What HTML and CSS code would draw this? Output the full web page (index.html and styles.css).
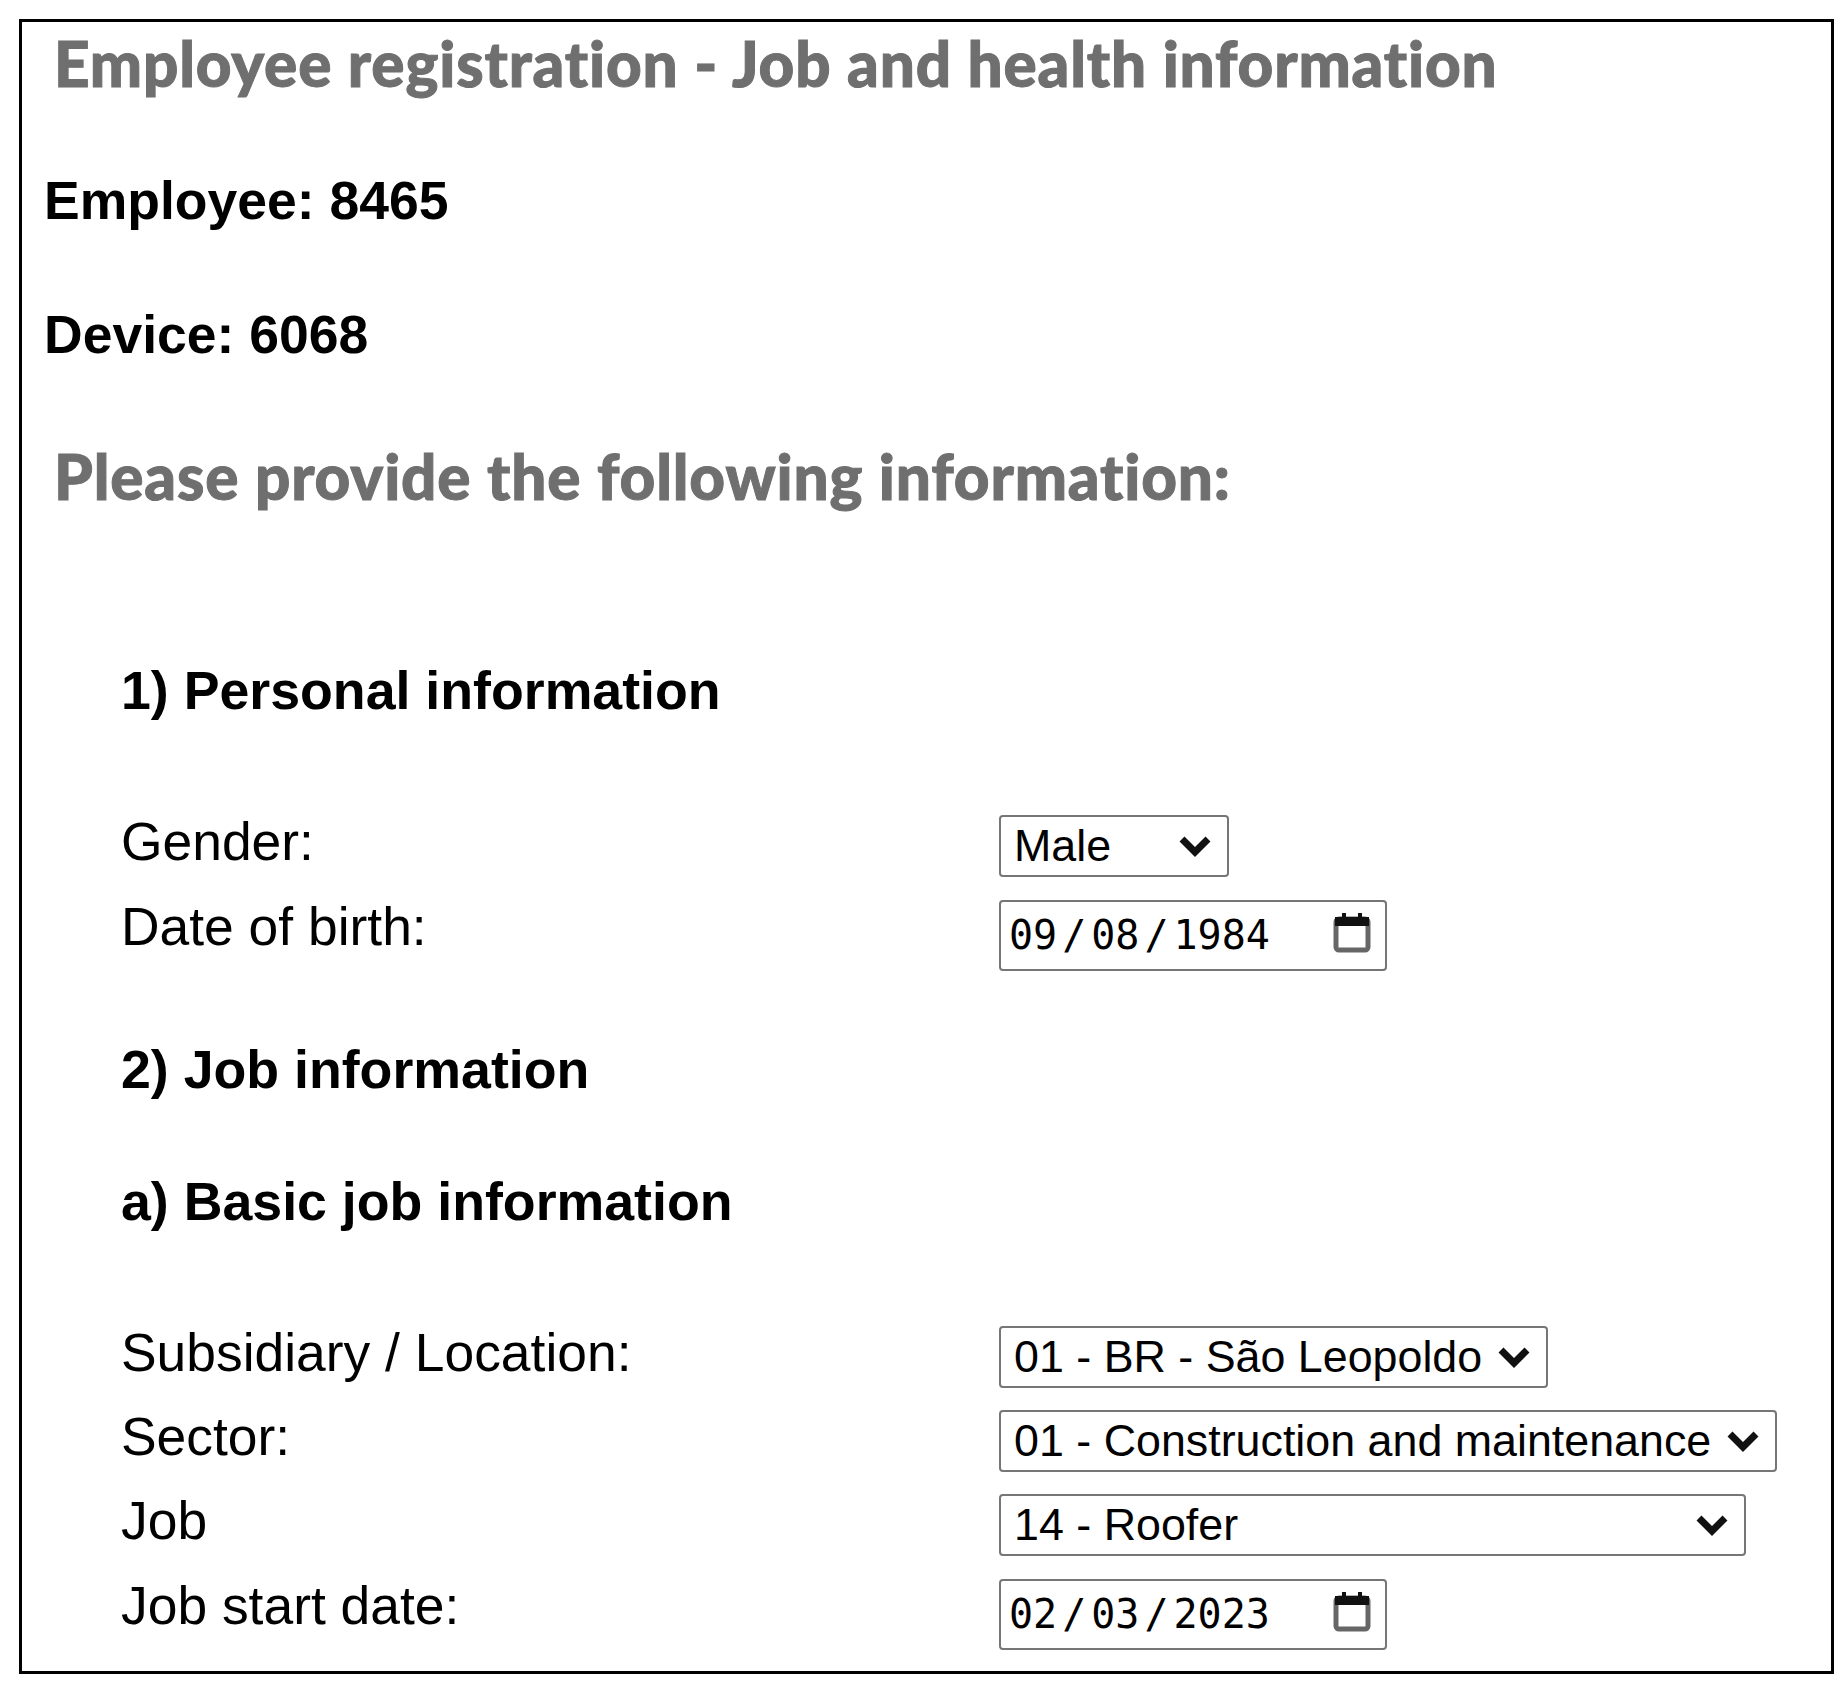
FILE: index.html
```html
<!DOCTYPE html>
<html lang="en-US">
<head>
<meta charset="utf-8">
<title>Employee registration</title>
<link rel="stylesheet" href="styles.css">
</head>
<body>
<main class="frame">
  <h1 class="title">Employee registration - Job and health information</h1>
  <p class="meta meta-employee">Employee: 8465</p>
  <p class="meta meta-device">Device: 6068</p>
  <h2 class="title title-sub">Please provide the following information:</h2>
  <form class="form">
    <h3 class="section section-first">1) Personal information</h3>
    <div class="row row-first">
      <label class="label" for="gender">Gender:</label>
      <select class="control select-gender" id="gender"><option>Male</option></select>
    </div>
    <div class="row row-date">
      <label class="label" for="dob">Date of birth:</label>
      <input class="date" id="dob" type="date" value="1984-09-08">
    </div>
    <h3 class="section section-job">2) Job information</h3>
    <h3 class="section section-basic">a) Basic job information</h3>
    <div class="row row-first">
      <label class="label" for="sub">Subsidiary / Location:</label>
      <select class="control select-sub" id="sub"><option>01 - BR - São Leopoldo</option></select>
    </div>
    <div class="row">
      <label class="label" for="sector">Sector:</label>
      <select class="control select-sector" id="sector"><option>01 - Construction and maintenance</option></select>
    </div>
    <div class="row">
      <label class="label" for="job">Job</label>
      <select class="control select-job" id="job"><option>14 - Roofer</option></select>
    </div>
    <div class="row row-date">
      <label class="label" for="start">Job start date:</label>
      <input class="date" id="start" type="date" value="2023-02-03">
    </div>
  </form>
</main>
</body>
</html>
```
FILE: styles.css
```css
* { box-sizing: border-box; }
html, body { background: #fff; }
body { margin: 0; padding: 19px 13px 0 19px; font-family: "Liberation Sans", Arial, sans-serif; color: #000; }
.frame { height: 1655px; border: 3px solid #000; padding: 6px 0 0 23px; overflow: hidden; }
.title { margin: 0 0 0 9px; font-family: Lato, "Noto Sans", sans-serif; font-weight: 900; font-size: 62px; line-height: 70px; letter-spacing: 0.85px; font-variant-ligatures: none; -webkit-text-stroke: 1px #6f6f70; color: #6f6f70; }
.meta { margin: 0 0 0 -1px; font-weight: 700; font-size: 53.5px; line-height: 60px; }
.meta-employee { margin-top: 73px; }
.meta-device { margin-top: 74px; }
.title-sub { margin-top: 76px; }
.form { padding-left: 76px; }
.section { margin: 0; font-weight: 700; font-size: 53.7px; line-height: 60px; }
.section-first { margin-top: 149px; }
.section-job { margin-top: 68px; }
.section-basic { margin-top: 72px; }
.row { display: grid; grid-template-columns: 878px 1fr; align-items: start; margin-top: 19px; }
.row-first { margin-top: 92px; }
.row-date { margin-top: 20px; }
.label { font-size: 53.4px; line-height: 60px; }
.control, .date { display: block; margin: 3px 0 0; background-color: #fff; border: 2px solid #767676; border-radius: 4px; color: #000; }
.control { height: 62px; padding: 0 0 3px 13px; font-family: "Liberation Sans", Arial, sans-serif; font-size: 44.8px; appearance: none; -webkit-appearance: none; background-repeat: no-repeat; background-position: right 15px center; background-size: 34px 22px; background-image: url("data:image/svg+xml,%3Csvg xmlns='http://www.w3.org/2000/svg' viewBox='0 0 34 22'%3E%3Cpath d='M4 4l13 13L30 4' fill='none' stroke='%23111' stroke-width='7'/%3E%3C/svg%3E"); }
.select-gender { width: 230px; }
.select-sub { width: 549px; }
.select-sector { width: 778px; }
.select-job { width: 747px; }
.date { width: 388px; height: 71px; padding: 0 0 2px 7px; font-family: "DejaVu Sans Mono", monospace; font-size: 40px; }
.date::-webkit-datetime-edit-text { padding: 0 4px; }
.date::-webkit-calendar-picker-indicator { width: 40px; height: 44px; margin: 0 13px 4px 0; padding: 0; background-size: 40px 44px; background-repeat: no-repeat; background-image: url("data:image/svg+xml,%3Csvg xmlns='http://www.w3.org/2000/svg' viewBox='0 0 40 44'%3E%3Crect x='4' y='8' width='32' height='31' rx='3' fill='none' stroke='%23666' stroke-width='5'/%3E%3Cpath d='M3 6h34v9H3zM10 2h4v6h-4zM26 2h4v6h-4z' fill='%23111'/%3E%3C/svg%3E"); }
```
